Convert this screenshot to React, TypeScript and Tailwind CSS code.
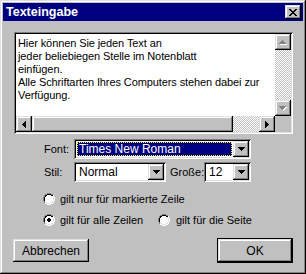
import React from "react";

const raised =
  "shadow-[inset_-1px_-1px_#000,inset_1px_1px_#dfdfdf,inset_-2px_-2px_#808080,inset_2px_2px_#fff]";
const sunken =
  "shadow-[inset_1px_1px_#808080,inset_-1px_-1px_#fff,inset_2px_2px_#000,inset_-2px_-2px_#dfdfdf]";
const checker =
  "bg-[image:conic-gradient(#fff_25%,#c0c0c0_0_50%,#fff_0_75%,#c0c0c0_0)] bg-[length:2px_2px]";

type R = [number, number, number, number];

function Pix({ w, h, rects, color }: { w: number; h: number; rects: R[]; color: string }) {
  return (
    <svg width={w} height={h} viewBox={`0 0 ${w} ${h}`} shapeRendering="crispEdges">
      {rects.map(([x, y, rw, rh], i) => (
        <rect key={i} x={x} y={y} width={rw} height={rh} fill={color} />
      ))}
    </svg>
  );
}

const up: R[] = [
  [3, 0, 1, 1],
  [2, 1, 3, 1],
  [1, 2, 5, 1],
  [0, 3, 7, 1],
];
const down: R[] = [
  [0, 0, 7, 1],
  [1, 1, 5, 1],
  [2, 2, 3, 1],
  [3, 3, 1, 1],
];
const left: R[] = [
  [3, 0, 1, 7],
  [2, 1, 1, 5],
  [1, 2, 1, 3],
  [0, 3, 1, 1],
];
const right: R[] = [
  [0, 0, 1, 7],
  [1, 1, 1, 5],
  [2, 2, 1, 3],
  [3, 3, 1, 1],
];

function DisabledArrow({ rects, w, h }: { rects: R[]; w: number; h: number }) {
  return (
    <div className="relative w-[8px] h-[5px]">
      <div className="absolute left-[1px] top-[1px]">
        <Pix w={w} h={h} rects={rects} color="#ffffff" />
      </div>
      <div className="absolute left-0 top-0">
        <Pix w={w} h={h} rects={rects} color="#808080" />
      </div>
    </div>
  );
}

function XGlyph() {
  const rects: R[] = [
    [0, 0, 2, 1],
    [6, 0, 2, 1],
    [1, 1, 2, 1],
    [5, 1, 2, 1],
    [2, 2, 4, 1],
    [3, 3, 2, 1],
    [2, 4, 4, 1],
    [1, 5, 2, 1],
    [5, 5, 2, 1],
    [0, 6, 2, 1],
    [6, 6, 2, 1],
  ];
  return <Pix w={8} h={7} rects={rects} color="#000" />;
}

function DropBtn() {
  return (
    <div className={`w-[16px] h-full bg-[#c0c0c0] ${raised} flex items-center justify-center`}>
      <Pix w={7} h={4} rects={down} color="#000" />
    </div>
  );
}

function Radio({ checked }: { checked?: boolean }) {
  return (
    <svg width={12} height={12} viewBox="0 0 12 12" shapeRendering="crispEdges">
      <rect x={4} y={0} width={4} height={1} fill="#808080" />
      <rect x={2} y={1} width={2} height={1} fill="#808080" />
      <rect x={8} y={1} width={2} height={1} fill="#808080" />
      <rect x={1} y={2} width={1} height={2} fill="#808080" />
      <rect x={0} y={4} width={1} height={4} fill="#808080" />
      <rect x={1} y={8} width={1} height={2} fill="#808080" />
      <rect x={10} y={2} width={1} height={2} fill="#fff" />
      <rect x={11} y={4} width={1} height={4} fill="#fff" />
      <rect x={10} y={8} width={1} height={2} fill="#fff" />
      <rect x={2} y={10} width={2} height={1} fill="#fff" />
      <rect x={8} y={10} width={2} height={1} fill="#fff" />
      <rect x={4} y={11} width={4} height={1} fill="#fff" />
      <rect x={4} y={1} width={4} height={1} fill="#000" />
      <rect x={2} y={2} width={2} height={1} fill="#000" />
      <rect x={8} y={2} width={2} height={1} fill="#000" />
      <rect x={2} y={3} width={1} height={1} fill="#000" />
      <rect x={1} y={4} width={1} height={4} fill="#000" />
      <rect x={9} y={3} width={1} height={1} fill="#dfdfdf" />
      <rect x={10} y={4} width={1} height={4} fill="#dfdfdf" />
      <rect x={2} y={9} width={2} height={1} fill="#dfdfdf" />
      <rect x={8} y={9} width={2} height={1} fill="#dfdfdf" />
      <rect x={4} y={10} width={4} height={1} fill="#dfdfdf" />
      <rect x={9} y={8} width={1} height={1} fill="#dfdfdf" />
      <rect x={4} y={2} width={4} height={1} fill="#fff" />
      <rect x={3} y={3} width={6} height={1} fill="#fff" />
      <rect x={2} y={4} width={8} height={4} fill="#fff" />
      <rect x={2} y={8} width={7} height={1} fill="#fff" />
      <rect x={4} y={9} width={4} height={1} fill="#fff" />
      {checked && (
        <>
          <rect x={5} y={4} width={2} height={1} fill="#000" />
          <rect x={4} y={5} width={4} height={2} fill="#000" />
          <rect x={5} y={7} width={2} height={1} fill="#000" />
        </>
      )}
    </svg>
  );
}

export default function App() {
  return (
    <div className="w-[306px] h-[274px] bg-[#c0c0c0] p-[3px] flex flex-col shadow-[inset_-1px_-1px_#000,inset_1px_1px_#dfdfdf,inset_-2px_-2px_#808080,inset_2px_2px_#fff] font-['Liberation_Sans',Arial,sans-serif] text-[11px] text-black">
      {/* Title bar */}
      <div className="h-[18px] bg-[#000080] flex items-center justify-between pl-[3px] pr-[2px]">
        <span className="text-white font-bold text-[12.5px] leading-none">Texteingabe</span>
        <div className={`w-[16px] h-[14px] bg-[#c0c0c0] ${raised} flex items-center justify-center`}>
          <XGlyph />
        </div>
      </div>

      {/* Text area */}
      <div className="pl-[11px] pt-[11px]">
        <div className={`w-[279px] h-[102px] p-[2px] bg-white ${sunken}`}>
          <div className="grid grid-cols-[259px_16px] grid-rows-[82px_16px]">
            <div className="bg-white pl-[2px] pt-[3px] leading-[13px] text-[11px] tracking-[-0.1px]">
              Hier können Sie jeden Text an
              <br />
              jeder beliebiegen Stelle im Notenblatt
              <br />
              einfügen.
              <br />
              Alle Schriftarten Ihres Computers stehen dabei zur
              <br />
              Verfügung.
            </div>
            <div className="flex flex-col">
              <div className={`h-[16px] bg-[#c0c0c0] ${raised} flex items-center justify-center`}>
                <DisabledArrow rects={up} w={7} h={4} />
              </div>
              <div className={`flex-1 ${checker}`} />
              <div className={`h-[16px] bg-[#c0c0c0] ${raised} flex items-center justify-center`}>
                <DisabledArrow rects={down} w={7} h={4} />
              </div>
            </div>
            <div className="flex">
              <div className={`w-[16px] bg-[#c0c0c0] ${raised} flex items-center justify-center`}>
                <Pix w={4} h={7} rects={left} color="#000" />
              </div>
              <div className={`w-[201px] bg-[#c0c0c0] ${raised}`} />
              <div className={`flex-1 ${checker}`} />
              <div className={`w-[16px] bg-[#c0c0c0] ${raised} flex items-center justify-center`}>
                <Pix w={4} h={7} rects={right} color="#000" />
              </div>
            </div>
            <div className="bg-[#c0c0c0]" />
          </div>
        </div>
      </div>

      {/* Font row */}
      <div className="flex items-center mt-[5px] pl-[41px]">
        <span className="w-[30px]">Font:</span>
        <div className={`w-[177px] h-[20px] p-[2px] bg-white ${sunken} flex`}>
          <div className="flex-1 p-[1px]">
            <div className="h-full bg-[#000080] border border-dotted border-[#ffff00] text-white text-[12px] leading-[13px] pl-[1px]">
              Times New Roman
            </div>
          </div>
          <DropBtn />
        </div>
      </div>

      {/* Stil row */}
      <div className="flex items-center mt-[3px] pl-[41px]">
        <span className="w-[30px]">Stil:</span>
        <div className={`w-[92px] h-[20px] p-[2px] bg-white ${sunken} flex`}>
          <div className="flex-1 pl-[3px] text-[12px] leading-[16px]">Normal</div>
          <DropBtn />
        </div>
        <span className="ml-[4px] w-[34px]">Große:</span>
        <div className={`w-[47px] h-[20px] p-[2px] bg-white ${sunken} flex`}>
          <div className="flex-1 pl-[3px] text-[12px] leading-[16px]">12</div>
          <DropBtn />
        </div>
      </div>

      {/* Radios */}
      <div className="flex items-center mt-[11px] pl-[40px] h-[12px]">
        <Radio />
        <span className="ml-[5px]">gilt nur für markierte Zeile</span>
      </div>
      <div className="flex items-center mt-[9px] pl-[40px] h-[12px]">
        <div className="w-[115px] flex items-center">
          <Radio checked />
          <span className="ml-[5px]">gilt für alle Zeilen</span>
        </div>
        <Radio />
        <span className="ml-[6px]">gilt für die Seite</span>
      </div>

      {/* Buttons */}
      <div className="flex items-center justify-between mt-[12px] pl-[10px] pr-[10px]">
        <div className={`w-[76px] h-[23px] bg-[#c0c0c0] ${raised} flex items-center justify-center text-[12px]`}>
          Abbrechen
        </div>
        <div className="w-[76px] h-[25px] border border-black">
          <div className={`w-full h-full bg-[#c0c0c0] ${raised} flex items-center justify-center text-[12px]`}>
            OK
          </div>
        </div>
      </div>
    </div>
  );
}
